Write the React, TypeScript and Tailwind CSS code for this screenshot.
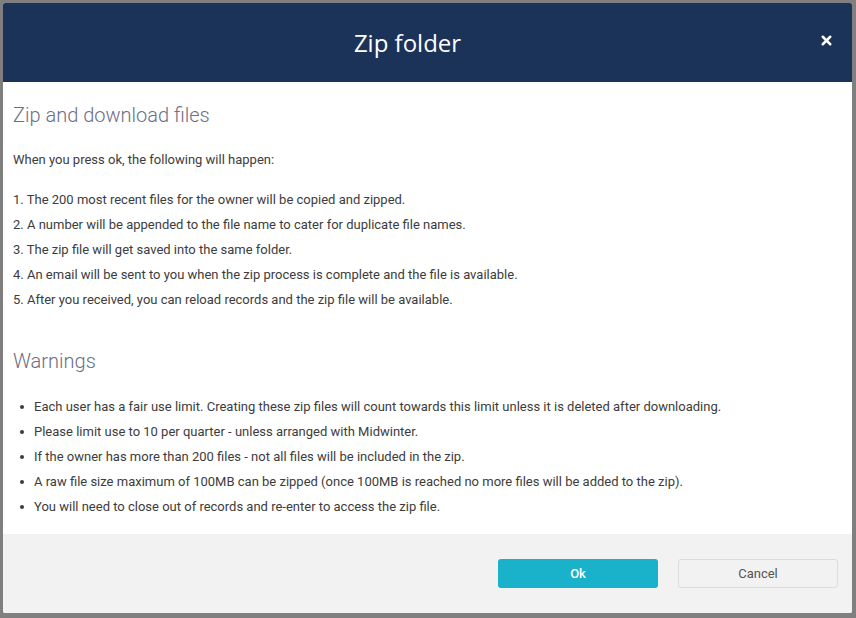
import { X } from "lucide-react";

const steps = [
  "The 200 most recent files for the owner will be copied and zipped.",
  "A number will be appended to the file name to cater for duplicate file names.",
  "The zip file will get saved into the same folder.",
  "An email will be sent to you when the zip process is complete and the file is available.",
  "After you received, you can reload records and the zip file will be available.",
];

const warnings = [
  "Each user has a fair use limit. Creating these zip files will count towards this limit unless it is deleted after downloading.",
  "Please limit use to 10 per quarter - unless arranged with Midwinter.",
  "If the owner has more than 200 files - not all files will be included in the zip.",
  "A raw file size maximum of 100MB can be zipped (once 100MB is reached no more files will be added to the zip).",
  "You will need to close out of records and re-enter to access the zip file.",
];

export default function App() {
  return (
    <div className="h-[618px] w-[856px] bg-[#7f7f7f] pl-[3px] pt-[3px] font-['Roboto',sans-serif]">
      <div className="flex h-[610px] w-[849px] flex-col overflow-hidden rounded-[2px] bg-white">
        <div className="relative flex h-[79px] shrink-0 items-center justify-center bg-[#1b3259] pr-[40px]">
          <h1 className="font-['Open_Sans',sans-serif] text-[24px] font-medium text-white">
            Zip folder
          </h1>
          <button className="absolute right-[18px] top-[30px] text-white">
            <X size={15} strokeWidth={4} />
          </button>
        </div>

        <div className="flex-1 px-[10px] pt-[19px] text-[13px] text-[#3c3c3c]">
          <h2 className="text-[20px] font-light leading-[28px] text-[#6b6e86]">
            Zip and download files
          </h2>
          <p className="mt-[21px] leading-[20px]">
            When you press ok, the following will happen:
          </p>
          <ol className="mt-[17px]">
            {steps.map((s, i) => (
              <li key={i} className="leading-[25px]">
                {i + 1}. {s}
              </li>
            ))}
          </ol>

          <h2 className="mt-[35px] text-[20px] font-light leading-[28px] text-[#6b6e86]">
            Warnings
          </h2>
          <ul className="mt-[19px]">
            {warnings.map((w, i) => (
              <li key={i} className="flex items-center leading-[25px]">
                <span className="ml-[7px] mr-[10px] h-[4px] w-[4px] rounded-full bg-[#3c3c3c]" />
                {w}
              </li>
            ))}
          </ul>
        </div>

        <div className="flex h-[79px] shrink-0 items-center justify-end gap-[20px] bg-[#f2f2f2] pr-[14px]">
          <button className="h-[29px] w-[160px] rounded-[3px] bg-[#1ab1ca] text-[13px] font-medium text-white">
            Ok
          </button>
          <button className="h-[29px] w-[160px] rounded-[3px] border border-[#dcdcdc] bg-[#f2f2f2] text-[13px] text-[#555]">
            Cancel
          </button>
        </div>
      </div>
    </div>
  );
}
